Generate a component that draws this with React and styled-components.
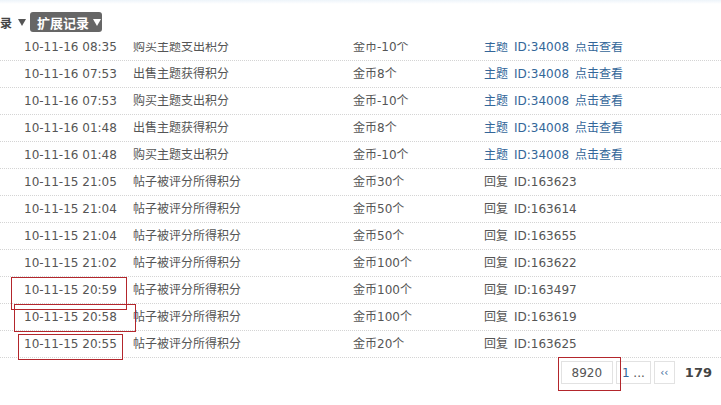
import styled, { createGlobalStyle } from "styled-components";

const GlobalStyle = createGlobalStyle`
  html, body {
    margin: 0;
    padding: 0;
    background: #fff;
  }
  body {
    font-family: "DejaVu Sans", Verdana, "Noto Sans CJK SC", sans-serif;
    font-size: 12px;
    color: #555;
  }
`;

const rows = [
  { date: "10-11-16 08:35", desc: "购买主题支出积分", amount: "金币-10个", kind: "主题", id: "34008", link: true },
  { date: "10-11-16 07:53", desc: "出售主题获得积分", amount: "金币8个", kind: "主题", id: "34008", link: true },
  { date: "10-11-16 07:53", desc: "购买主题支出积分", amount: "金币-10个", kind: "主题", id: "34008", link: true },
  { date: "10-11-16 01:48", desc: "出售主题获得积分", amount: "金币8个", kind: "主题", id: "34008", link: true },
  { date: "10-11-16 01:48", desc: "购买主题支出积分", amount: "金币-10个", kind: "主题", id: "34008", link: true },
  { date: "10-11-15 21:05", desc: "帖子被评分所得积分", amount: "金币30个", kind: "回复", id: "163623" },
  { date: "10-11-15 21:04", desc: "帖子被评分所得积分", amount: "金币50个", kind: "回复", id: "163614" },
  { date: "10-11-15 21:04", desc: "帖子被评分所得积分", amount: "金币50个", kind: "回复", id: "163655" },
  { date: "10-11-15 21:02", desc: "帖子被评分所得积分", amount: "金币100个", kind: "回复", id: "163622" },
  { date: "10-11-15 20:59", desc: "帖子被评分所得积分", amount: "金币100个", kind: "回复", id: "163497" },
  { date: "10-11-15 20:58", desc: "帖子被评分所得积分", amount: "金币100个", kind: "回复", id: "163619" },
  { date: "10-11-15 20:55", desc: "帖子被评分所得积分", amount: "金币20个", kind: "回复", id: "163625" },
];

// annotation rectangles drawn over the screenshot
const marks = [
  { left: 11, top: 277, width: 116, height: 33 },
  { left: 14, top: 304, width: 122, height: 28 },
  { left: 18, top: 334, width: 105, height: 26 },
  { left: 558, top: 357, width: 63, height: 34 },
];

export default function App() {
  return (
    <Page>
      <GlobalStyle />
      <TopStrip />
      <Header>
        <TabLabel>
          录<Arrow $gap="6px" />
        </TabLabel>
        <ActiveTab>
          扩展记录<Arrow $light $gap="4px" />
        </ActiveTab>
      </Header>
      <Viewport>
        <List>
          {rows.map((r, i) => (
            <Row key={i}>
              <span>{r.date}</span>
              <span>{r.desc}</span>
              <span>{r.amount}</span>
              <Related $link={r.link}>
                <Kind>{r.kind}</Kind>
                <span>ID:{r.id}</span>
                {r.link && <ViewLink>点击查看</ViewLink>}
              </Related>
            </Row>
          ))}
        </List>
      </Viewport>
      <Pager>
        <PagerBox $w="52px">8920</PagerBox>
        <PagerBox $w="35px">
          <Blue>1</Blue>&nbsp;...
        </PagerBox>
        <PagerBox $w="21px">
          <Blue $small>‹‹</Blue>
        </PagerBox>
        <Current>179</Current>
      </Pager>
      {marks.map((m, i) => (
        <Mark key={i} style={m} />
      ))}
    </Page>
  );
}

const Page = styled.div`
  position: relative;
  width: 721px;
  height: 405px;
  overflow: hidden;
  background: #fff;
`;

const TopStrip = styled.div`
  height: 4px;
  background: linear-gradient(#edf4fa, #fff);
`;

const Header = styled.div`
  height: 38px;
  padding-top: 8px;
  box-sizing: border-box;
  display: flex;
  align-items: flex-start;
  gap: 4px;
`;

const TabLabel = styled.div`
  height: 20px;
  display: flex;
  align-items: center;
  font-weight: bold;
  font-size: 12px;
  color: #444;
  font-family: "Noto Sans CJK SC", sans-serif;
`;

const ActiveTab = styled.div`
  height: 20px;
  width: 72px;
  box-sizing: border-box;
  padding-left: 7px;
  display: flex;
  align-items: center;
  background: #666;
  border-radius: 3px;
  color: #fff;
  font-weight: bold;
  font-size: 13px;
  font-family: "Noto Sans CJK SC", sans-serif;
`;

const Arrow = styled.span`
  margin-left: ${(p) => p.$gap};
  width: 0;
  height: 0;
  border-left: 4px solid transparent;
  border-right: 4px solid transparent;
  border-top: 7px solid ${(p) => (p.$light ? "#fff" : "#555")};
`;

const Viewport = styled.div`
  overflow: hidden;
`;

const List = styled.div`
  margin-top: -8px;
`;

const Row = styled.div`
  display: grid;
  grid-template-columns: 109px 220px 131px 1fr;
  padding-left: 24px;
  height: 27px;
  line-height: 26px;
  box-sizing: border-box;
  border-bottom: 1px dotted #d4d4d4;
  white-space: nowrap;
  color: #555;
`;

const Related = styled.span`
  color: ${(p) => (p.$link ? "#336699" : "#555")};
`;

const Kind = styled.span`
  margin-right: 6px;
`;

const ViewLink = styled.span`
  margin-left: 6px;
`;

const Pager = styled.div`
  display: flex;
  justify-content: flex-end;
  align-items: center;
  gap: 3px;
  padding: 3px 9px 0 0;
`;

const PagerBox = styled.span`
  width: ${(p) => p.$w};
  height: 23px;
  box-sizing: border-box;
  border: 1px solid #e2e2e2;
  display: flex;
  align-items: center;
  justify-content: center;
  color: #555;
  font-size: 12px;
`;

const Blue = styled.span`
  color: #336699;
  font-size: ${(p) => (p.$small ? "10px" : "12px")};
`;

const Current = styled.span`
  margin-left: 7px;
  font-weight: bold;
  font-size: 13px;
  color: #444;
`;

const Mark = styled.div`
  position: absolute;
  box-sizing: border-box;
  border: 1.5px solid #b3262c;
  pointer-events: none;
`;
